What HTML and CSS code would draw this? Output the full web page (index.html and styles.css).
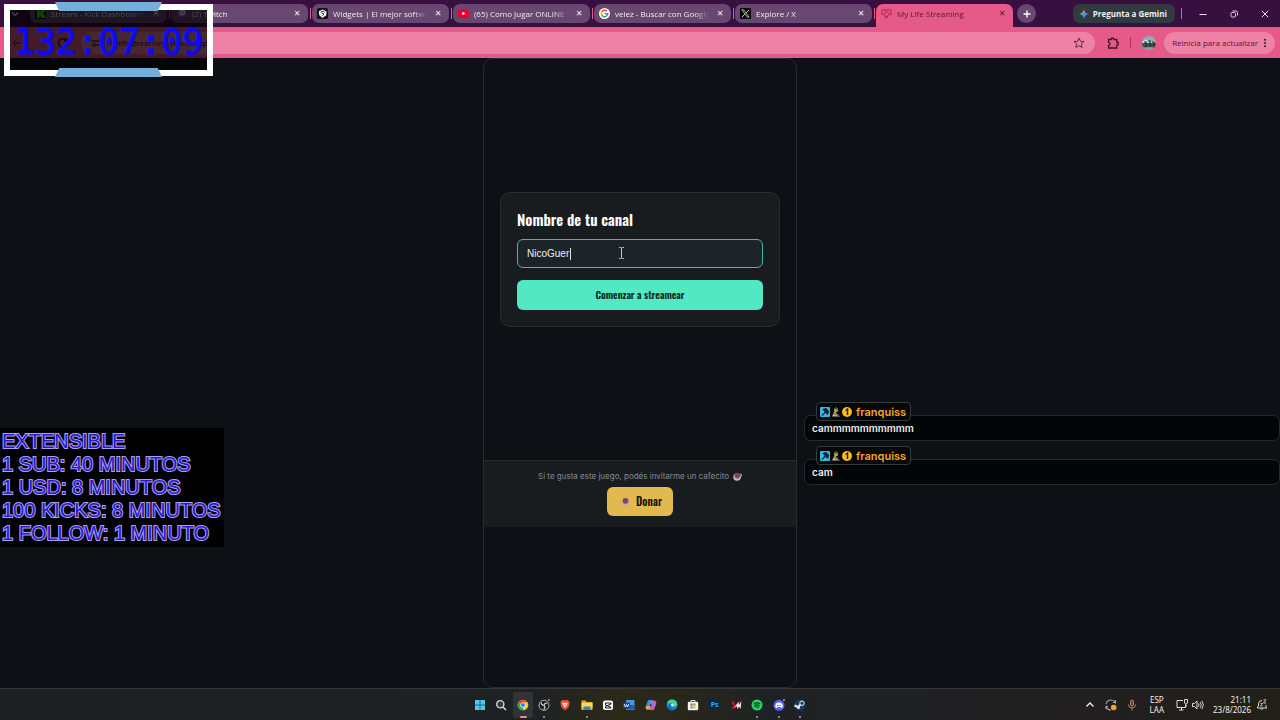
FILE: index.html
```html
<!DOCTYPE html>
<html lang="es">
<head>
    <meta charset="UTF-8">
    <meta name="viewport" content="width=device-width, initial-scale=1.0">
    <title>My Life Streaming</title>
    <link rel="stylesheet" href="styles.css">
</head>
<body>
    <header class="browser">
        <nav class="tab-strip" aria-label="Pestañas">
            <button class="tab-search" aria-label="Buscar pestañas"><svg class="icon-s" viewBox="0 0 10 10"><path d="M2 3.5l3 3 3-3" fill="none" stroke="#ddd" stroke-width="1.3"/></svg></button>
            <div class="tab">
                <svg class="favicon" viewBox="0 0 12 12"><rect width="12" height="12" fill="#0b0e0f"/><path d="M2 1h3v3h1V2h1V1h4v3h-1v1H9v2h1v1h1v3H7v-1H6V8H5v3H2z" fill="#2be80c"/></svg>
                <a href="#kick">Stream - Kick Dashboard</a>
                <button class="tab-close" aria-label="Cerrar">✕</button>
            </div>
            <div class="tab">
                <svg class="favicon" viewBox="0 0 12 12"><path d="M3 1h8v6L8.500 9.500H6.500L4.500 11.500v-2H1.500V3z" fill="#9146ff"/><path d="M4 2h6v4.500L8.500 8H4z" fill="#eee"/><path d="M6 3.500v2.500M8.300 3.500v2.500" stroke="#9146ff"/></svg>
                <a href="#twitch">(2) Twitch</a>
                <button class="tab-close" aria-label="Cerrar">✕</button>
            </div>
            <div class="tab">
                <svg class="favicon" viewBox="0 0 12 12"><rect width="12" height="12" rx="2" fill="#101416"/><path d="M2 3.500L6.500 1.500 10.500 4 10 8 6 11 2.500 8z" fill="#fff"/><path d="M4 4.500l3-1 1.500 1.200M5 5.500l2.500 1L6 8.500" fill="none" stroke="#101416"/></svg>
                <a href="#widgets">Widgets | El mejor softwar</a>
                <button class="tab-close" aria-label="Cerrar">✕</button>
            </div>
            <div class="tab">
                <svg class="favicon" viewBox="0 0 12 12"><rect y="1.500" width="12" height="9" rx="2" fill="#e4002f"/><path d="M4.800 4l3.200 2-3.200 2z" fill="#fff"/></svg>
                <a href="#youtube">(65) Como Jugar ONLINE F</a>
                <button class="tab-close" aria-label="Cerrar">✕</button>
            </div>
            <div class="tab">
                <svg class="favicon" viewBox="0 0 12 12"><circle cx="6" cy="6" r="6" fill="#fff"/><g fill="none" stroke-width="1.700"><path d="M3 4.300A3.500 3.500 0 0 1 8.500 3.500" stroke="#ea4335"/><path d="M3 4.200A3.500 3.500 0 0 0 3 7.800" stroke="#fbbc05"/><path d="M3 7.700A3.500 3.500 0 0 0 8.300 8.700" stroke="#34a853"/><path d="M8.200 8.700A3.500 3.500 0 0 0 9.500 6.200H6.200" stroke="#4285f4"/></g></svg>
                <a href="#google">velez - Buscar con Google</a>
                <button class="tab-close" aria-label="Cerrar">✕</button>
            </div>
            <div class="tab">
                <svg class="favicon" viewBox="0 0 12 12"><rect width="12" height="12" fill="#000"/><path d="M2 2h2l6 8H8z" fill="none" stroke="#eee" stroke-width=".8"/><path d="M10 2L6.800 5.500M5.200 6.700L2 10" stroke="#eee"/></svg>
                <a href="#explore">Explore / X</a>
                <button class="tab-close" aria-label="Cerrar">✕</button>
            </div>
            <div class="tab active">
                <svg class="favicon" viewBox="0 0 12 12"><path d="M1 2h4l1 1 1-1h4v5H9L6 10 3 7H1z" fill="none" stroke="#b92d5e" stroke-width="1.200"/><path d="M3 4.500h1.500l1 1.500 1-2 1 1H9M4 10.500h4" fill="none" stroke="#b92d5e"/></svg>
                <a href="#streaming">My Life Streaming</a>
                <button class="tab-close" aria-label="Cerrar">✕</button>
            </div>
            <button class="new-tab" aria-label="Nueva pestaña"><svg class="icon-s" viewBox="0 0 10 10"><path d="M5 1.500v7M1.500 5h7" stroke="#fff" stroke-width="1.300"/></svg></button>
            <div class="window-controls">
                <button class="gemini"><svg class="icon-s" viewBox="0 0 10 10"><path d="M5 0Q5.600 4.400 10 5H5z" fill="#ee5746"/><path d="M10 5Q5.600 5.600 5 10V5z" fill="#4b8df8"/><path d="M5 10Q4.400 5.600 0 5h5z" fill="#3bb76a"/><path d="M0 5Q4.400 4.400 5 0v5z" fill="#e5b93e"/><circle cx="5" cy="5" r="1.700" fill="#4b8df8"/></svg>Pregunta a Gemini</button>
                <span class="divider"></span>
                <button class="win" aria-label="Minimizar"><svg class="icon-s" viewBox="0 0 10 10"><path d="M1.500 5.500h7" stroke="#e6dcea"/></svg></button>
                <button class="win" aria-label="Restaurar"><svg class="icon-s" viewBox="0 0 10 10"><g fill="none" stroke="#e6dcea" stroke-width=".9"><rect x="2" y="3.500" width="4.500" height="4.500" rx="1"/><path d="M3.500 2h3.500q1.500 0 1.500 1.500v3"/></g></svg></button>
                <button class="win" aria-label="Cerrar ventana"><svg class="icon-s" viewBox="0 0 10 10"><path d="M1.800 1.800l6.400 6.400M8.200 1.800L1.800 8.200" stroke="#e6dcea"/></svg></button>
            </div>
        </nav>
        <div class="toolbar">
            <button class="nav-btn" aria-label="Atrás"><svg class="icon-m" viewBox="0 0 12 12"><path d="M10 6H2.500M5.500 2.500L2 6l3.500 3.500" fill="none" stroke="#4b1830"/></svg></button>
            <button class="nav-btn" aria-label="Adelante"><svg class="icon-m" viewBox="0 0 12 12"><path d="M2 6h7.500M6.500 2.500L10 6 6.500 9.500" fill="none" stroke="#b74870"/></svg></button>
            <button class="nav-btn" aria-label="Recargar"><svg class="icon-m" viewBox="0 0 12 12"><path d="M9.500 3.500A4.300 4.300 0 1 0 10.200 6.500M10 1.500v2.500H7.500" fill="none" stroke="#2a0818" stroke-width="1.300"/></svg></button>
            <div class="address">
                <svg class="icon-m" viewBox="0 0 12 12"><path d="M1 4h6M5 8h6" stroke="#301020" stroke-width="1.200"/><circle cx="9" cy="4" r="1.500" fill="none" stroke="#301020"/><circle cx="3" cy="8" r="1.500" fill="none" stroke="#301020"/></svg>
                <input class="url" type="text" value="mylifestreaming.vercel.app" aria-label="Dirección">
                <svg class="icon-m" viewBox="0 0 12 12"><path d="M6 1l1.400 3.300 3.600.3-2.700 2.300.8 3.600L6 8.600l-3.100 1.900.8-3.600L1 4.600l3.600-.3z" fill="none" stroke="#722646"/></svg>
            </div>
            <button class="ext" aria-label="Extensiones"><svg class="icon-m" viewBox="0 0 12 12"><path d="M1.500 2.500h2.700Q4.300 1 5.500 1t1.300 1.500h3V5q1.700.2 1.700 1.500T9.800 8v3H1.500V8.500Q3 8.300 3 6.900T1.500 5.300z" fill="none" stroke="#40132a" stroke-width="1.300"/></svg></button>
            <span class="toolbar-sep"></span>
            <svg class="avatar" viewBox="0 0 14 14"><circle cx="7" cy="7" r="7" fill="#91aeb7"/><path d="M1 5q3-3 6 0t6-1v3H0z" fill="#cad7dc"/><path d="M0 7h14q0 3-1.500 4.500H2Q0 10 0 7z" fill="#405247"/><path d="M2 6h2v5M6 5h2v6M10 6h2v4" fill="none" stroke="#222d2b" stroke-width="1.200"/><path d="M3 12q4-2 8 0-4 3-8 0z" fill="#8a9c98"/></svg>
            <button class="update">Reinicia para actualizar<svg class="dots" viewBox="0 0 4 12"><g fill="#40132a"><circle cx="2" cy="2" r="1.200"/><circle cx="2" cy="6" r="1.200"/><circle cx="2" cy="10" r="1.200"/></g></svg></button>
        </div>
    </header>

    <main class="page">
        <div class="game">
            <section class="stage">
                <form class="card">
                    <label for="channel">Nombre de tu canal</label>
                    <div class="field">
                        <input id="channel" class="channel" type="text" value="NicoGuer">
                        <span class="caret"></span>
                        <svg class="cursor" viewBox="0 0 7 12"><path d="M1 .5h1.500q1 0 1 1v9q0 1-1 1H1M6 .5H4.500q-1 0-1 1v9q0 1 1 1H6" fill="none" stroke="#c9cccf" stroke-width=".9"/></svg>
                    </div>
                    <button class="start" type="button">Comenzar a streamear</button>
                </form>
            </section>
            <footer class="donate">
                <p>Si te gusta este juego, podés invitarme un cafecito
                    <svg class="cup" viewBox="0 0 10 10"><circle cx="4.500" cy="5.500" r="4.200" fill="#cbb0cb"/><circle cx="5" cy="4" r="3.200" fill="#754657"/><path d="M8 2.500q2-.5 1.500 1.500T7 6" fill="none" stroke="#d9c2d8"/></svg>
                </p>
                <a class="donate-btn" href="#donar"><svg class="cup" viewBox="0 0 10 10"><circle cx="5" cy="5.500" r="4.300" fill="#cba6b8"/><circle cx="5" cy="4.300" r="3.200" fill="#784b5d"/></svg>Donar</a>
            </footer>
            <div class="rest"></div>
        </div>
    </main>

    <footer class="taskbar">
        <div class="apps">
            <button class="app" aria-label="Inicio"><svg viewBox="0 0 12 12"><g fill="#52c6f2"><rect x="1" y="1" width="4.700" height="4.700"/><rect x="6.300" y="1" width="4.700" height="4.700"/><rect x="1" y="6.300" width="4.700" height="4.700"/><rect x="6.300" y="6.300" width="4.700" height="4.700"/></g></svg></button>
            <button class="app" aria-label="Buscar"><svg viewBox="0 0 12 12"><circle cx="5.300" cy="5.300" r="3.600" fill="#383d42" stroke="#d8dadd" stroke-width="1.300"/><path d="M8 8l3 3" stroke="#d8dadd" stroke-width="1.500"/></svg></button>
            <button class="app current" aria-label="Chrome"><svg viewBox="0 0 12 12"><circle cx="6" cy="6" r="5.300" fill="#f6c72d"/><path d="M6 6L1.400 3.300A5.300 5.300 0 0 1 10.600 3.300H6z" fill="#e74435"/><path d="M6 6L6 11.300A5.300 5.300 0 0 1 1.400 3.300z" fill="#35a853"/><circle cx="6" cy="6" r="2.600" fill="#fff"/><circle cx="6" cy="6" r="2" fill="#3979e8"/></svg></button>
            <button class="app open" aria-label="OBS"><svg viewBox="0 0 12 12"><circle cx="6" cy="6.300" r="5" fill="#161719" stroke="#c2c4c6" stroke-width=".9"/><path d="M6 6.300Q3 6 3.300 3.500M6 6.300q1-3 3.300-1.800M6 6.300q2 2.500-.5 4" fill="none" stroke="#c2c4c6" stroke-width="1.400"/><circle cx="11" cy="1" r="1" fill="#e7777d"/></svg></button>
            <button class="app" aria-label="Brave"><svg viewBox="0 0 12 12"><path d="M3.500 1h5l2.200 2-.8 5L6 11.500 2.100 8l-.8-5z" fill="#f04c32"/><path d="M3.500 3.500L6 4l2.500-.5L8 6.300 6 8.500 4 6.300z" fill="#fff"/><path d="M5 5.500h2L6 7z" fill="#f04c32"/></svg></button>
            <button class="app open" aria-label="Explorador"><svg viewBox="0 0 12 12"><path d="M.5 1.500h4l1 1.500h6v8H.5z" fill="#e7ad20"/><path d="M.5 4h11v5H.5z" fill="#fbd75b"/><path d="M2.500 7.500h7V11h-7z" fill="#2a86bf"/></svg></button>
            <button class="app" aria-label="CapCut"><svg viewBox="0 0 12 12"><rect x="1" y="1.500" width="10" height="9.500" rx="2" fill="#fff"/><path d="M9 5V4H3.500v2L9 8.300V9H3.500V7.300L9 5" fill="none" stroke="#111"/></svg></button>
            <button class="app" aria-label="Word"><svg viewBox="0 0 12 12"><rect x="3" y="1" width="8.500" height="10" rx="1" fill="#4498e0"/><path d="M3 6h8.500v4.500H3z" fill="#1e5cb2"/><rect y="3.500" width="7" height="6" rx="1" fill="#174a9b"/><path d="M1.300 5l1 3L3.500 5.500 4.700 8l1-3" fill="none" stroke="#fff" stroke-width=".8"/></svg></button>
            <button class="app" aria-label="Copilot"><svg viewBox="0 0 12 12"><path d="M4 1h4l-2 8q-.5 1.500-2 1.500H2Q0 10 1 7l1.500-4.500Q3 1 4 1z" fill="#269bea"/><path d="M8 1.500h1.500Q12 2 11 5l-1.500 4.500Q9 11 8 11H4l2-8q.5-1.500 2-1.500z" fill="#d65caa"/><path d="M1 7h4.500l-.7 2.500Q4 11 2 10.500 0 10 1 7z" fill="#f1a14b"/><path d="M7.200 4h4L10 7.500H6.200z" fill="#966fe2"/><path d="M5.500 5h1L6 7.500H5z" fill="#222"/></svg></button>
            <button class="app" aria-label="Edge"><svg viewBox="0 0 12 12"><circle cx="6" cy="6" r="5.400" fill="#198dd6"/><path d="M1 5Q1.500.7 6 .6q4.800.2 5.400 4.900Q11 8 8 7.500 7.500 3.500 4 4 2 4.200 1 5z" fill="#45cf9b"/><path d="M4.500 5.500Q4 10 9.500 9.800 5 13 2 9.500 2 6 4.500 5.500z" fill="#106ac0"/><circle cx="6.500" cy="6" r="1.500" fill="#d6f1ee"/></svg></button>
            <button class="app" aria-label="Store"><svg viewBox="0 0 12 12"><path d="M4 3V1.500h4V3" fill="none" stroke="#ddd"/><rect x=".8" y="2.800" width="10.400" height="8.500" rx="1.200" fill="#f2f2f2"/><path d="M3.500 4.500h2.200v2.200H3.500z" fill="#e65332"/><path d="M6.300 4.500h2.200v2.200H6.300z" fill="#73b73f"/><path d="M3.500 7.300h2.200v2.200H3.500z" fill="#2f9ce4"/><path d="M6.300 7.300h2.200v2.200H6.300z" fill="#f5b52c"/></svg></button>
            <button class="app ps" aria-label="Photoshop"><span>Ps</span></button>
            <button class="app" aria-label="Juego"><svg viewBox="0 0 12 12"><path d="M1 2l3 1 1 3 5-4.500-2 9L6.500 8l-5 2.500 2-4z" fill="#c8192e"/><path d="M4 9l4.500-6 .5 3 2.500-4L10.500 10 9 7.500 7.500 10 7 7z" fill="#eee"/></svg></button>
            <button class="app open" aria-label="Spotify"><svg viewBox="0 0 12 12"><circle cx="6" cy="6" r="5.500" fill="#25d366"/><path d="M2.700 4.300q3.800-1 6.600.5M3 6.200q3.200-.8 5.700.5M3.400 8q2.600-.6 4.600.4" fill="none" stroke="#163321" stroke-width="1.100"/></svg></button>
            <button class="app open" aria-label="Discord"><svg viewBox="0 0 12 12"><circle cx="6" cy="6.300" r="5.500" fill="#5865f2"/><path d="M3.500 4Q6 3 8.500 4q1.500 2 1.300 4L8 9l-.7-1H4.700L4 9 2.200 8Q2 6 3.500 4z" fill="#fff"/><circle cx="4.700" cy="6.500" r=".8" fill="#5865f2"/><circle cx="7.300" cy="6.500" r=".8" fill="#5865f2"/><circle cx="11" cy="1" r="1" fill="#f28b50"/></svg></button>
            <button class="app open" aria-label="Steam"><svg viewBox="0 0 12 12"><circle cx="6" cy="6" r="5.500" fill="#153d65"/><path d="M.5 6.500L4 8l3-3" stroke="#e5edf3" stroke-width="2" fill="none"/><circle cx="8" cy="4.200" r="2.200" fill="#153d65" stroke="#e5edf3"/><circle cx="4.500" cy="8.500" r="1.500" fill="#e5edf3"/></svg></button>
        </div>
        <div class="tray">
            <svg viewBox="0 0 12 12"><path d="M2.500 7.500L6 4l3.500 3.500" fill="none" stroke="#eee" stroke-width="1.300"/></svg>
            <svg viewBox="0 0 12 12"><path d="M1 5q1-4 5-4 3 0 4.500 2.500V1M10.500 3.500H8M1 7q1 4 5 4M1 10V7.500h2" fill="none" stroke="#a5a5a7" stroke-width="1.100"/><circle cx="8.700" cy="8.500" r="2.800" fill="#f7a229"/></svg>
            <svg viewBox="0 0 12 12"><rect x="4.500" y="1" width="3" height="6" rx="1.500" fill="#73433a" stroke="#d08b73" stroke-width=".8"/><path d="M2.500 5.500q0 3.500 3.500 3.500t3.500-3.500M6 9v2.500" fill="none" stroke="#d08b73" stroke-width=".9"/></svg>
            <span class="lang">ESP<br>LAA</span>
            <span class="net">
                <svg viewBox="0 0 12 12"><path d="M7 1.500H1v7h8.500V6M3 11h4.500M5.500 8.500V11" fill="none" stroke="#ddd"/><path d="M8.500.5h3V4L10 5 8.500 4zM10 5v3" fill="none" stroke="#ddd"/></svg>
                <svg viewBox="0 0 12 12"><path d="M.5 4.500h2L5 2v8L2.500 7.500h-2z" fill="none" stroke="#ddd"/><path d="M6.500 4.300q1.200 1.700 0 3.400M8.200 3q2.200 3 0 6M9.900 1.800q3 4.200 0 8.400" fill="none" stroke="#ddd" stroke-width=".9"/></svg>
            </span>
            <span class="clock">21:11<br>23/8/2026</span>
            <svg viewBox="0 0 12 12"><path d="M1.500 9V8l1-1V4.500Q3 1.500 6 1.500M10 6v1.500l.8 1.500H1.500M4.500 9.500q1.200 2 2.500 0" fill="none" stroke="#ddd"/><path d="M7.500.8H10L7.500 4H10M4.500 4.500h2L4.500 7h2" fill="none" stroke="#ddd" stroke-width=".8"/></svg>
        </div>
    </footer>

    <!-- Stream overlays -->
    <aside class="timer"><time>132:07:09</time></aside>

    <aside class="rules">
        <p>EXTENSIBLE</p>
        <p>1 SUB: 40 MINUTOS</p>
        <p>1 USD: 8 MINUTOS</p>
        <p>100 KICKS: 8 MINUTOS</p>
        <p>1 FOLLOW: 1 MINUTO</p>
    </aside>

    <aside class="chat">
        <article class="message">
            <div class="user">
                <svg viewBox="0 0 10 10"><rect width="10" height="10" rx="1" fill="#35b9e9"/><path d="M2 8.500L6 4.500M3.500 2.500L6 1.800 8.500 4.500 7.500 7z" fill="#10252e" stroke="#10252e" stroke-width="1.300"/></svg>
                <svg viewBox="0 0 10 10"><circle cx="5" cy="3" r="2.200" fill="#c99a72"/><path d="M3 1.500L5 0l2 1.500v1H3z" fill="#3b612f"/><path d="M1 9.500l2.500-5L9 9.500z" fill="#d8b184"/><path d="M2 6l6 3" stroke="#645444"/></svg>
                <svg viewBox="0 0 10 10"><circle cx="5" cy="5" r="5" fill="#f9ba24"/><path d="M3.700 3.500L5.500 2v6" fill="none" stroke="#3b2502" stroke-width="1.500"/></svg>
                <b>franquiss</b>
            </div>
            <p>cammmmmmmmmm</p>
        </article>
        <article class="message">
            <div class="user">
                <svg viewBox="0 0 10 10"><rect width="10" height="10" rx="1" fill="#35b9e9"/><path d="M2 8.500L6 4.500M3.500 2.500L6 1.800 8.500 4.500 7.500 7z" fill="#10252e" stroke="#10252e" stroke-width="1.300"/></svg>
                <svg viewBox="0 0 10 10"><circle cx="5" cy="3" r="2.200" fill="#c99a72"/><path d="M3 1.500L5 0l2 1.500v1H3z" fill="#3b612f"/><path d="M1 9.500l2.500-5L9 9.500z" fill="#d8b184"/><path d="M2 6l6 3" stroke="#645444"/></svg>
                <svg viewBox="0 0 10 10"><circle cx="5" cy="5" r="5" fill="#f9ba24"/><path d="M3.700 3.500L5.500 2v6" fill="none" stroke="#3b2502" stroke-width="1.500"/></svg>
                <b>franquiss</b>
            </div>
            <p>cam</p>
        </article>
    </aside>
</body>
</html>
```
FILE: styles.css
```css
:root {
    --frame: #37103f;
    --tab: #684870;
    --pink: #e55a88;
    --pink-light: #ed82a6;
    --page: #0d1115;
    --panel: #181c1f;
    --line: #272c2f;
    --mint: #52e8c1;
    --yellow: #e1b94f;
    --ui: "Open Sans", "Noto Sans", sans-serif;
    --display: Oswald, "Roboto Condensed", "Liberation Sans", sans-serif;
}

* {
    box-sizing: border-box;
    margin: 0;
    padding: 0;
}

body {
    display: flex;
    flex-direction: column;
    height: 100vh;
    overflow: hidden;
    position: relative;
    background-color: var(--page);
    color: #eee;
    font-family: var(--ui);
    font-size: 8px;
}

button {
    border: none;
    background: none;
    color: inherit;
    font: inherit;
}

a {
    color: inherit;
    text-decoration: none;
}

svg {
    display: block;
    flex: none;
}

.icon-s {
    width: 10px;
    height: 10px;
}

.icon-m {
    width: 12px;
    height: 12px;
}

/* Browser window */
.tab-strip {
    display: flex;
    gap: 4px;
    height: 27px;
    padding: 4px 0 0 8px;
    background-color: var(--frame);
}

.tab-search {
    width: 18px;
    height: 19px;
    padding-left: 2px;
}

.tab {
    display: flex;
    align-items: center;
    gap: 5px;
    flex: 0 1 137px;
    min-width: 0;
    height: 19px;
    padding: 0 5px;
    border-radius: 7px;
    background-color: var(--tab);
    position: relative;
}

.tab::after {
    content: "";
    position: absolute;
    right: -3px;
    top: 4px;
    width: 1px;
    height: 11px;
    background-color: var(--pink);
}

.tab a {
    flex: 1;
    overflow: hidden;
    white-space: nowrap;
    mask-image: linear-gradient(to right, #000 85%, transparent);
}

.favicon {
    width: 11px;
    height: 11px;
}

.tab-close {
    width: 12px;
    font-family: "DejaVu Sans", sans-serif;
}

.tab.active {
    height: 23px;
    padding-bottom: 4px;
    border-radius: 7px 7px 0 0;
    background-color: var(--pink);
    color: #5b1735;
}

.tab.active::after {
    display: none;
}

.new-tab {
    display: grid;
    place-items: center;
    width: 19px;
    height: 19px;
    border-radius: 50%;
    background-color: var(--tab);
}

.window-controls {
    display: flex;
    align-items: center;
    height: 19px;
    margin-left: auto;
}

.gemini {
    display: flex;
    align-items: center;
    gap: 4px;
    height: 19px;
    padding: 0 8px 0 6px;
    border-radius: 7px;
    background-color: #303b40;
    font-weight: 700;
    white-space: nowrap;
}

.divider {
    width: 1px;
    height: 11px;
    margin: 0 5px 0 6px;
    background-color: var(--pink);
}

.win {
    display: grid;
    place-items: center;
    width: 31px;
    height: 19px;
}

.toolbar {
    display: flex;
    align-items: center;
    height: 31px;
    padding: 0 5px 0 6px;
    background-color: var(--pink);
}

.nav-btn {
    width: 23px;
    padding-left: 5px;
}

.address {
    display: flex;
    align-items: center;
    gap: 4px;
    flex: 1;
    height: 22px;
    margin-left: 6px;
    padding: 0 10px;
    border-radius: 11px;
    background-color: var(--pink-light);
}

.url {
    flex: 1;
    border: none;
    outline: none;
    background: none;
    color: #35101f;
    font: 8px var(--ui);
}

.ext {
    margin-left: 12px;
}

.toolbar-sep {
    width: 1px;
    height: 11px;
    margin: 0 11px;
    background-color: #a53360;
}

.avatar {
    width: 14px;
    height: 14px;
}

.update {
    display: flex;
    align-items: center;
    gap: 5px;
    height: 22px;
    margin-left: 8px;
    padding: 0 8px;
    border-radius: 11px;
    background-color: var(--pink-light);
    color: #5b1735;
    white-space: nowrap;
}

.dots {
    width: 4px;
    height: 10px;
}

/* Game page */
.page {
    display: flex;
    justify-content: center;
    flex: 1;
    min-height: 0;
}

.game {
    display: flex;
    flex-direction: column;
    width: 100%;
    max-width: 314px;
    border: 1px solid var(--line);
    border-radius: 10px;
}

.stage {
    display: flex;
    flex-direction: column;
    justify-content: center;
    flex: 5;
    padding: 0 16px;
}

.rest {
    flex: 2;
}

.card {
    padding: 16px;
    border: 1px solid var(--line);
    border-radius: 10px;
    background-color: var(--panel);
}

.card label {
    display: block;
    margin-bottom: 9px;
    color: #fff;
    font: 600 15px/21px var(--display);
}

.field {
    position: relative;
    margin-bottom: 12px;
}

.channel {
    display: block;
    width: 100%;
    height: 29px;
    padding: 0 9px;
    border: 1px solid #48b99b;
    border-radius: 6px;
    outline: none;
    background-color: #1d2429;
    color: #eee;
    font: 10px "Liberation Sans", Arial, sans-serif;
}

.caret {
    position: absolute;
    left: 53px;
    top: 9px;
    width: 1px;
    height: 12px;
    background-color: #ddd;
}

.cursor {
    position: absolute;
    left: 101px;
    top: 8px;
    width: 7px;
    height: 12px;
}

.start {
    display: block;
    width: 100%;
    height: 30px;
    border-radius: 6px;
    background-color: var(--mint);
    color: #0d2520;
    font: 600 10px var(--display);
}

.donate {
    display: flex;
    flex-direction: column;
    align-items: center;
    gap: 4px;
    padding: 9px 0 11px;
    border-top: 1px solid var(--line);
    background-color: var(--panel);
}

.donate p {
    display: flex;
    align-items: center;
    gap: 4px;
    color: #858a8e;
    font: 8px/13px Inter, sans-serif;
}

.cup {
    width: 9px;
    height: 9px;
}

.donate-btn {
    display: flex;
    align-items: center;
    gap: 6px;
    height: 29px;
    padding: 0 11px 0 14px;
    border-radius: 6px;
    background-color: var(--yellow);
    color: #1a1608;
    font: 600 11px var(--display);
}

/* Windows taskbar */
.taskbar {
    display: grid;
    grid-template-columns: 1fr 340px 1fr;
    align-items: center;
    height: 32px;
    border-top: 1px solid #34373a;
    background: linear-gradient(to right, #1c2023 0, #1e2224 42%, #2b2918 48%, #29271a 53%, #1f2224 60%, #211f20 85%, #232017);
}

.apps {
    display: flex;
    justify-content: space-between;
    grid-column: 2;
}

.app {
    display: grid;
    place-items: center;
    width: 20px;
    height: 26px;
    border-radius: 3px;
    position: relative;
}

.app svg,
.tray svg {
    width: 12px;
    height: 12px;
}

.app.current {
    background-color: #303437;
}

.app.open::after,
.app.current::after {
    content: "";
    position: absolute;
    bottom: 0;
    left: 9px;
    width: 2px;
    height: 2px;
    border-radius: 1px;
    background-color: #aaa;
}

.app.current::after {
    left: 7px;
    width: 7px;
    background-color: #ee8871;
}

.ps span {
    width: 11px;
    height: 11px;
    border-radius: 2px;
    background-color: #062944;
    color: #38a9f5;
    font-size: 7px;
    font-weight: bold;
    line-height: 11px;
}

.tray {
    display: flex;
    align-items: center;
    justify-content: flex-end;
    gap: 9px;
    padding-right: 12px;
    font: 8px/10px "Noto Sans", sans-serif;
}

.lang {
    padding: 0 3px;
    text-align: center;
}

.net {
    display: flex;
    gap: 4px;
}

.clock {
    text-align: right;
}

.tray .clock + svg {
    margin-left: -4px;
}

/* Stream overlays */
.timer {
    position: absolute;
    top: 4px;
    left: 4px;
    padding: 12px 2px 0;
    border: 6px solid #fff;
    background-color: rgba(0, 0, 0, 0.7);
    color: #0c0cf2;
    font: 35px/40px "DejaVu Sans Mono", monospace;
    text-align: center;
    width: 209px;
    height: 72px;
    -webkit-text-stroke: 1px #0c0cf2;
}

.timer time {
    display: block;
}

.timer::before,
.timer::after {
    content: "";
    position: absolute;
    left: 45px;
    top: -8px;
    width: 107px;
    height: 9px;
    background-color: #78add9;
    clip-path: polygon(4% 0, 96% 0, 100% 100%, 0 100%);
}

.timer::before {
    clip-path: polygon(0 0, 100% 0, 96% 100%, 4% 100%);
}

.timer::after {
    top: auto;
    bottom: -7px;
}

.rules {
    position: absolute;
    left: 0;
    top: 428px;
    padding: 2px 3px 2px 2px;
    background-color: #000;
    color: #2a18cf;
    font: 20px/23px "Liberation Sans", Arial, sans-serif;
    -webkit-text-stroke: 2px #aaa2f0;
    paint-order: stroke fill;
}

.chat {
    position: absolute;
    left: 804px;
    right: 0;
    top: 402px;
    display: flex;
    flex-direction: column;
    gap: 5px;
    font-family: Inter, sans-serif;
}

.message .user {
    display: flex;
    align-items: center;
    gap: 1px;
    width: max-content;
    height: 19px;
    margin: 0 0 -6px 12px;
    padding: 0 4px 0 3px;
    border: 1px solid #353a3d;
    border-radius: 4px;
    background-color: #050809;
    color: #f6a42c;
    font-size: 11px;
    position: relative;
}

.user svg {
    width: 10px;
    height: 10px;
}

.user b {
    margin-left: 3px;
    font-weight: 600;
}

.message p {
    height: 26px;
    padding-left: 7px;
    border: 1px solid #25292c;
    border-radius: 7px;
    background-color: #030607;
    font-size: 10px;
    font-weight: 600;
    line-height: 24px;
}
```
